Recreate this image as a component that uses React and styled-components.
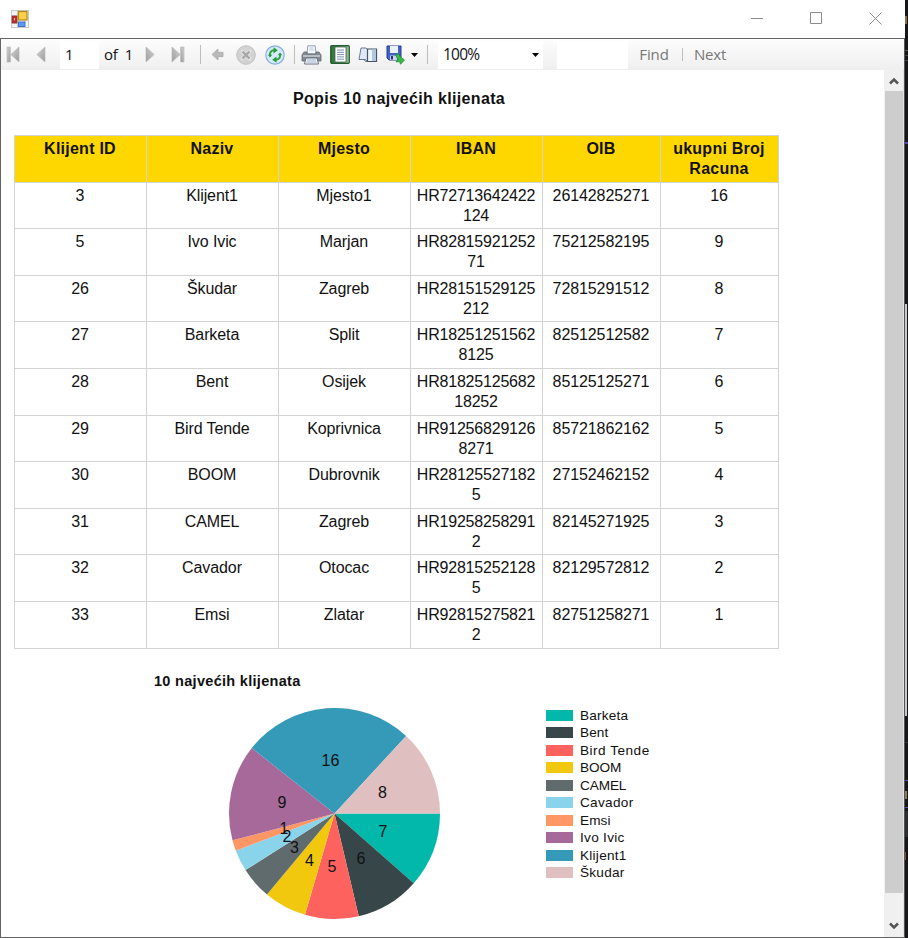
import React from "react";
import styled, { createGlobalStyle } from "styled-components";

const Global = createGlobalStyle`
  * { box-sizing: border-box; }
  html, body { margin: 0; padding: 0; overflow: hidden; }
  body { background: #17171a; font-family: "Liberation Sans", Arial, sans-serif; color: #111; }
  svg { display: block; flex: none; }
`;

const Desktop = styled.div`
  display: flex;
  width: 908px;
  height: 938px;
  background: #17171a;
`;

const Window = styled.div`
  display: flex;
  flex-direction: column;
  width: 905px;
  height: 938px;
  background: #fff;
`;

const TitleBar = styled.header`
  display: flex;
  align-items: center;
  justify-content: space-between;
  height: 38px;
  padding: 0 23px 1px 11px;
`;

const Controls = styled.div`
  display: flex;
  gap: 46px;
`;

const Client = styled.div`
  flex: 1;
  display: flex;
  flex-direction: column;
  min-height: 0;
  border: 1px solid #646464;
  border-right: 1px solid #555;
`;

const Toolbar = styled.div`
  display: flex;
  align-items: center;
  flex: none;
  height: 31px;
  background: linear-gradient(#fdfdfd, #efefef);
  font: 15px/20px "Open Sans", "Noto Sans", sans-serif;
  white-space: pre;
`;

const Slot = styled.div`
  display: flex;
  align-items: center;
  justify-content: ${(p) => p.$align || "center"};
  flex: none;
  width: ${(p) => p.$w}px;
  height: 28px;
`;

const Field = styled(Slot)`
  background: #fff;
  padding: 0 4px 0 5px;
  justify-content: space-between;
`;

const ToolText = styled.span`
  color: ${(p) => (p.$muted ? "#777" : "#111")};
  font-size: ${(p) => p.$size || 15}px;
  letter-spacing: ${(p) => p.$track || 0}px;
  padding-bottom: 2px;
`;

const Divider = styled.span`
  width: 1px;
  height: ${(p) => p.$h || 19}px;
  background: #bdbdbd;
`;

const Body = styled.div`
  display: flex;
  flex: 1;
  min-height: 0;
`;

const Report = styled.main`
  flex: 1;
  display: flex;
  flex-direction: column;
  padding-left: 13px;
`;

const Title = styled.h1`
  margin: 19px 0 0;
  width: 770px;
  text-align: center;
  font-size: 16px;
  line-height: 20px;
  letter-spacing: 0.35px;
  font-weight: bold;
`;

const Table = styled.div`
  display: grid;
  grid-template-columns: 132px 132px 132px 132px 118px 118px;
  grid-auto-rows: 46.6px;
  width: 765px;
  margin-top: 26px;
  border-left: 1px solid #d3d3d3;
  border-top: 1px solid #d3d3d3;
`;

const Cell = styled.div`
  padding: 3px 5px 0 4px;
  text-align: center;
  font-size: 16px;
  line-height: 20px;
  letter-spacing: ${(p) => p.$track ?? -0.1}px;
  word-break: ${(p) => (p.$wrap ? "break-all" : "normal")};
  border-right: 1px solid #d3d3d3;
  border-bottom: 1px solid #d3d3d3;
`;

const HeadCell = styled(Cell)`
  background: #ffd700;
  font-weight: bold;
  letter-spacing: 0.25px;
`;

const Chart = styled.section`
  display: grid;
  grid-template-columns: 532px 1fr;
  margin-top: 22px;
`;

const ChartTitle = styled.h2`
  grid-column: 1 / -1;
  margin: 0;
  padding-left: 140px;
  font-size: 14.5px;
  line-height: 20px;
  letter-spacing: 0.3px;
  font-weight: bold;
`;

const Pie = styled.svg`
  margin: 17px 0 0 210px;
  font: 16px "Liberation Sans", Arial, sans-serif;
`;

const Legend = styled.ul`
  list-style: none;
  margin: 16px 0 0;
  padding: 0;
`;

const LegendItem = styled.li`
  display: flex;
  align-items: center;
  gap: 7px;
  height: 17.5px;
  font-size: 13.6px;
  letter-spacing: ${(p) => p.$track || 0}px;
  white-space: nowrap;
`;

const Swatch = styled.span`
  width: 27px;
  height: 11px;
  background: ${(p) => p.$color};
`;

const ScrollBar = styled.aside`
  display: flex;
  flex-direction: column;
  align-items: center;
  width: 20px;
  background: #f0f0f0;
  border-right: 1px solid #e3e3e3;
`;

const ScrollButton = styled.div`
  display: flex;
  justify-content: center;
  align-items: ${(p) => (p.$low ? "flex-end" : "center")};
  padding-bottom: ${(p) => (p.$low ? 7 : 0)}px;
  height: ${(p) => p.$h}px;
`;

const Thumb = styled.div`
  flex: 1;
  width: 18px;
  background: #cdcdcd;
`;

const Backdrop = styled.div`
  flex: 1;
  display: flex;
  flex-direction: column;
  background: #17171a;
`;

const Sliver = styled.span`
  flex: none;
  width: ${(p) => p.$w || 3}px;
  height: ${(p) => p.$h}px;
  background: ${(p) => p.$color};
  margin-top: ${(p) => p.$gap}px;
`;

const columns = ["Klijent ID", "Naziv", "Mjesto", "IBAN", "OIB", "ukupni Broj Racuna"];

const rows = [
  ["3", "Klijent1", "Mjesto1", "HR72713642422124", "26142825271", "16"],
  ["5", "Ivo Ivic", "Marjan", "HR8281592125271", "75212582195", "9"],
  ["26", "Škudar", "Zagreb", "HR28151529125212", "72815291512", "8"],
  ["27", "Barketa", "Split", "HR182512515628125", "82512512582", "7"],
  ["28", "Bent", "Osijek", "HR8182512568218252", "85125125271", "6"],
  ["29", "Bird Tende", "Koprivnica", "HR912568291268271", "85721862162", "5"],
  ["30", "BOOM", "Dubrovnik", "HR281255271825", "27152462152", "4"],
  ["31", "CAMEL", "Zagreb", "HR192582582912", "82145271925", "3"],
  ["32", "Cavador", "Otocac", "HR928152521285", "82129572812", "2"],
  ["33", "Emsi", "Zlatar", "HR928152758212", "82751258271", "1"],
];

const slices = [
  { name: "Barketa", value: 7, color: "#01b8aa", lx: 154, ly: 123, track: 0.2 },
  { name: "Bent", value: 6, color: "#374649", lx: 132, ly: 150.5, track: 0.1 },
  { name: "Bird Tende", value: 5, color: "#fd625e", lx: 103, ly: 158, track: 0.5 },
  { name: "BOOM", value: 4, color: "#f2c80f", lx: 80.5, ly: 152, track: -0.1 },
  { name: "CAMEL", value: 3, color: "#5f6b6d", lx: 65.5, ly: 139.5, track: -0.1 },
  { name: "Cavador", value: 2, color: "#8ad4eb", lx: 58, ly: 128.5, track: 0.3 },
  { name: "Emsi", value: 1, color: "#fe9666", lx: 55, ly: 120, track: 0.1 },
  { name: "Ivo Ivic", value: 9, color: "#a66999", lx: 53, ly: 94.5, track: 0.3 },
  { name: "Klijent1", value: 16, color: "#3599b8", lx: 101.5, ly: 52, track: 0.25 },
  { name: "Škudar", value: 8, color: "#dfbfbf", lx: 153.5, ly: 84, track: 0.25 },
];

const total = slices.reduce((sum, s) => sum + s.value, 0);
const CX = 105.5;
const CY = 105.5;
const R = 105.5;

function slicePath(index) {
  const before = slices.slice(0, index).reduce((sum, s) => sum + s.value, 0);
  const a = (before / total) * Math.PI * 2;
  const b = ((before + slices[index].value) / total) * Math.PI * 2;
  const at = (t) => `${CX + R * Math.cos(t)} ${CY + R * Math.sin(t)}`;
  return `M${CX} ${CY}L${at(a)}A${R} ${R} 0 0 1 ${at(b)}Z`;
}

const AppIcon = () => (
  <svg width="18" height="18" viewBox="0 0 18 18">
    <rect x=".5" y=".5" width="17" height="17" fill="#f4f4f4" stroke="#c9c9c9" />
    <path d="M1 5.500h6M6.500 1v16M13.500 11v6M1 13.500h6" stroke="#c9c9c9" />
    <rect x="1" y="6" width="5" height="7" fill="#b9302a" stroke="#982019" strokeWidth=".6" />
    <path d="M3.500 8v2.500" stroke="#f0b0a8" />
    <rect x="7.500" y="1.500" width="8.500" height="8.500" fill="#ffd046" stroke="#b08a1c" strokeWidth="1.200" />
    <rect x="7.500" y="12" width="6.500" height="4.500" fill="#5c9af2" stroke="#3e72cf" />
  </svg>
);

const NavIcon = ({ kind }) => {
  const bar = kind === "first" || kind === "last";
  const flip = kind === "next" || kind === "last";
  const id = `steel-${kind}`;
  return (
    <svg width="14" height="17" viewBox="0 0 14 17">
      <defs>
        <linearGradient id={id} x1="0" y1="0" x2="1" y2="1">
          <stop offset="0" stopColor="#d4d4d4" />
          <stop offset="1" stopColor="#9c9c9c" />
        </linearGradient>
      </defs>
      <g transform={flip ? "translate(14 0) scale(-1 1)" : undefined} fill={`url(#${id})`} stroke="#b5b5b5" strokeWidth=".6">
        {bar && <rect x="1" y="1" width="3.300" height="15" />}
        <path d={bar ? "M13 1v15L4.800 8.500z" : "M11 1v15L2.800 8.500z"} />
      </g>
    </svg>
  );
};

const BackIcon = () => (
  <svg width="13" height="13" viewBox="0 0 13 13">
    <path d="M1 6.500 7 1v3.300h5v4.400H7V12z" fill="#b9b9b9" stroke="#a8a8a8" strokeWidth=".8" />
  </svg>
);

const StopIcon = () => (
  <svg width="20" height="20" viewBox="0 0 20 20">
    <circle cx="10" cy="10" r="9.300" fill="#d2d2d2" stroke="#c0c0c0" />
    <path d="m6.500 6.500 7 7m0-7-7 7" stroke="#fff" strokeWidth="4" strokeLinecap="round" opacity=".35" />
    <path d="m6.500 6.500 7 7m0-7-7 7" stroke="#a6a6a6" strokeWidth="2.300" />
  </svg>
);

const RefreshIcon = () => (
  <svg width="20" height="20" viewBox="0 0 20 20">
    <circle cx="10" cy="10" r="9.200" fill="#d7eafc" stroke="#86afe0" strokeWidth="1.200" />
    <g fill="none" stroke="#2fa53c" strokeWidth="2">
      <path d="M5 10.500C4.500 7.500 6 5.500 9 5.300" />
      <path d="M15 9.500c.5 3-1 5-4 5.200" />
    </g>
    <path d="M8.500 2.300 12.800 5.300 8.500 8.500zM11.500 11.500v6.300L7.200 14.700z" fill="#24a035" />
    <path d="M2.700 9.800h4.600L5 12.600zM12.700 10.200h4.600L15 7.400z" fill="#24a035" />
  </svg>
);

const PrintIcon = () => (
  <svg width="21" height="20" viewBox="0 0 21 20">
    <path d="M6 9 6.800.8h7.400L15 9z" fill="#f9fbff" stroke="#7888a0" strokeWidth=".8" />
    <path d="M8.500 3h4M8.200 5h5" stroke="#a9bad3" strokeWidth=".8" />
    <path d="M3 7h3v2h9V7h3l2 3v6H1v-6z" fill="#858b94" stroke="#606770" strokeWidth=".8" />
    <path d="M2 11h17" stroke="#d0d4da" strokeWidth="1.400" />
    <path d="M5 13h11l1.500 6h-14z" fill="#f8faff" stroke="#5c6573" strokeWidth=".9" />
    <path d="M6 15h9M5.500 17h10" stroke="#9baecb" />
  </svg>
);

const LayoutIcon = () => (
  <svg width="20" height="19" viewBox="0 0 20 19">
    <defs>
      <linearGradient id="leaf"><stop stopColor="#2b6d35" /><stop offset="1" stopColor="#9cc0a0" /></linearGradient>
    </defs>
    <rect x=".7" y=".7" width="18.600" height="17.600" rx="1" fill="url(#leaf)" stroke="#235c2c" strokeWidth="1.200" />
    <path d="M5 2h11v15H5z" fill="#fff" stroke="#34523c" strokeWidth=".7" />
    <path d="M7 5h7M7 7.300h7M7 9.600h7M7 11.900h7M7 14.200h7" stroke="#7790b5" />
  </svg>
);

const PageSetupIcon = () => (
  <svg width="20" height="18" viewBox="0 0 20 18">
    <path d="M1 13.500 3 2h5l1.500 1.500V15.500H7.500L6 13.500z" fill="#dfe9f7" stroke="#6c7d96" />
    <path d="M1 13.500h6.500L9.500 16" fill="none" stroke="#657388" />
    <path d="M9.500 3h9v12.500h-9z" fill="#eef5fd" stroke="#465267" strokeWidth="1.200" />
    <path d="M14 3.500h4v11.500h-4z" fill="#b5c6df" />
  </svg>
);

const ExportIcon = () => (
  <svg width="19" height="20" viewBox="0 0 19 20">
    <path d="M1 1h14v14H3l-2-2z" fill="#4361c8" stroke="#293d9c" />
    <path d="M4 1h8v7H4z" fill="#eaf0ff" />
    <path d="M4 10.500h7V15H4z" fill="#cbd5ef" />
    <path d="M5 11h2v3.500H5z" fill="#27336d" />
    <path d="M9.500 10 12 8.500l2.800 3.800L18.500 15l-4 4.300-1-2.800-3.500.5 1.800-2.800z" fill="#36bc43" stroke="#198927" strokeWidth=".7" />
  </svg>
);

const Caret = () => (
  <svg width="7" height="4" viewBox="0 0 7 4"><path d="M0 0h7L3.500 4z" fill="#000" /></svg>
);

const Chevron = ({ down }) => (
  <svg width="10" height="8" viewBox="0 0 10 8">
    <path d={down ? "M1 1.500 5 5.500 9 1.500" : "M1 6.500 5 2.500 9 6.500"} fill="none" stroke="#555" strokeWidth="2.500" />
  </svg>
);

export default function App() {
  return (
    <Desktop>
      <Global />
      <Window>
        <TitleBar>
          <AppIcon />
          <Controls>
            <svg width="13" height="13"><path d="M0 6.500h12" stroke="#8b8b8b" /></svg>
            <svg width="13" height="13"><path d="M.5.5h11v11H.5z" fill="none" stroke="#8b8b8b" /></svg>
            <svg width="13" height="13"><path d="m.5.5 12 12m0-12-12 12" stroke="#8b8b8b" /></svg>
          </Controls>
        </TitleBar>
        <Client>
          <Toolbar>
            <Slot $w={24}><NavIcon kind="first" /></Slot>
            <Slot $w={35} $align="flex-start"><Slot $w={32}><NavIcon kind="prev" /></Slot></Slot>
            <Field $w={39}><ToolText>1</ToolText></Field>
            <Slot $w={5} />
            <Slot $w={35} $align="flex-start"><ToolText $track={-0.25}>of  1</ToolText></Slot>
            <Slot $w={22}><NavIcon kind="next" /></Slot>
            <Slot $w={34}><NavIcon kind="last" /></Slot>
            <Slot $w={10}><Divider /></Slot>
            <Slot $w={24}><BackIcon /></Slot>
            <Slot $w={34}><StopIcon /></Slot>
            <Slot $w={24}><RefreshIcon /></Slot>
            <Slot $w={14}><Divider /></Slot>
            <Slot $w={20}><PrintIcon /></Slot>
            <Slot $w={38}><LayoutIcon /></Slot>
            <Slot $w={17}><PageSetupIcon /></Slot>
            <Slot $w={35}><Slot $w={16} $align="flex-start"><ExportIcon /></Slot></Slot>
            <Slot $w={16} $align="flex-start"><Caret /></Slot>
            <Slot $w={5} $align="flex-start"><Divider /></Slot>
            <Slot $w={6} />
            <Field $w={105}><ToolText $size={15.5} $track={-0.75}>100%</ToolText><Slot $w={7} $align="flex-start"><Caret /></Slot></Field>
            <Slot $w={14} />
            <Field $w={71} />
            <Slot $w={52}><ToolText $muted $track={-0.1}>Find</ToolText></Slot>
            <Slot $w={5}><Divider $h={13} /></Slot>
            <Slot $w={50}><ToolText $muted $track={-0.2}>Next</ToolText></Slot>
          </Toolbar>
          <Body>
            <Report>
              <Title>Popis 10 najvećih klijenata</Title>
              <Table>
                {columns.map((c) => <HeadCell key={c}>{c}</HeadCell>)}
                {rows.map((row) =>
                  row.map((value, i) => (
                    <Cell key={row[0] + columns[i]} $wrap={i === 3} $track={i === 3 ? -0.2 : -0.1}>{value}</Cell>
                  ))
                )}
              </Table>
              <Chart>
                <ChartTitle>10 najvećih klijenata</ChartTitle>
                <Pie width="222" height="212" viewBox="-5 0 222 212">
                  {slices.map((s, i) => <path key={s.name} d={slicePath(i)} fill={s.color} />)}
                  {slices.map((s) => (
                    <text key={s.name} x={s.lx} y={s.ly + 5.5} textAnchor="middle" fill="#111">{s.value}</text>
                  ))}
                </Pie>
                <Legend>
                  {slices.map((s) => (
                    <LegendItem key={s.name} $track={s.track}><Swatch $color={s.color} />{s.name}</LegendItem>
                  ))}
                </Legend>
              </Chart>
            </Report>
            <ScrollBar>
              <ScrollButton $h={21}><Chevron /></ScrollButton>
              <Thumb />
              <ScrollButton $h={44} $low><Chevron down /></ScrollButton>
            </ScrollBar>
          </Body>
        </Client>
      </Window>
      <Backdrop>
        <Sliver $gap={16} $h={8} $color="#8a6c4c" $w={2} />
        <Sliver $gap={26} $h={1} $color="#555" />
        <Sliver $gap={4} $h={1} $color="#444" />
        <Sliver $gap={4} $h={1} $color="#444" />
        <Sliver $gap={81} $h={2} $color="#5647b5" />
        <Sliver $gap={160} $h={412} $color="#c9c9c9" $w={2} />
        <Sliver $gap={26} $h={1} $color="#333" />
        <Sliver $gap={37} $h={1} $color="#5647b5" />
        <Sliver $gap={10} $h={8} $color="#8a7a60" $w={2} />
        <Sliver $gap={8} $h={1} $color="#5647b5" />
        <Sliver $gap={3} $h={26} $color="#2c2d31" />
        <Sliver $gap={15} $h={8} $color="#6d5238" $w={1} />
      </Backdrop>
    </Desktop>
  );
}
